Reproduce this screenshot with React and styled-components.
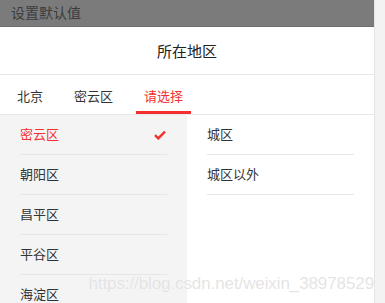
import React from "react";
import styled, { createGlobalStyle } from "styled-components";

const GlobalStyle = createGlobalStyle`
  html, body {
    margin: 0;
    padding: 0;
    background: #f3f3f3;
    font-family: "Noto Sans CJK SC", "Liberation Sans", sans-serif;
  }
`;

const Page = styled.div`
  position: relative;
  width: 374px;
  height: 303px;
  overflow: hidden;
  background: #fff;
  border-right: 1px solid #e4e4e4;
`;

const TopBar = styled.div`
  height: 26px;
  border-bottom: 1px solid #6e6e6e;
  background: #7b7b7b;
  color: #3c3c3c;
  font-size: 14px;
  line-height: 24px;
  padding-left: 11px;
`;

const Header = styled.div`
  height: 46px;
  padding-bottom: 1px;
  border-bottom: 1px solid #e8e8e8;
  display: flex;
  align-items: center;
  justify-content: center;
  font-size: 15px;
  color: #222;
`;

const Tabs = styled.div`
  height: 39px;
  border-bottom: 1px solid #e8e8e8;
  display: flex;
  gap: 15px;
  padding-left: 9px;
`;

const Tab = styled.div`
  padding: 0 8px;
  font-size: 13px;
  line-height: 38px;
  color: ${(p) => (p.active ? "#f23030" : "#333")};
  border-bottom: 3px solid ${(p) => (p.active ? "#f23030" : "transparent")};
  height: 34px;
  margin-top: 2px;
`;

const Columns = styled.div`
  display: flex;
  height: 200px;
`;

const Column = styled.div`
  width: ${(p) => p.w}px;
  background: ${(p) => p.bg};
  padding: 0 20px;
  box-sizing: border-box;
`;

const Item = styled.div`
  height: 37px;
  padding-bottom: 2px;
  border-bottom: 1px solid #e6e6e6;
  display: flex;
  align-items: center;
  justify-content: space-between;
  font-size: 13px;
  color: ${(p) => (p.active ? "#f23030" : "#333")};
`;

const Check = styled.svg`
  width: 12px;
  height: 10px;
  margin-right: 1px;
  margin-top: 2px;
`;

const Watermark = styled.div`
  position: absolute;
  right: 0px;
  bottom: 9px;
  font-family: "Liberation Sans", Arial, sans-serif;
  font-size: 17px;
  color: rgba(205, 205, 205, 0.55);
  text-shadow: 0 0 1px #fff;
  letter-spacing: -0.1px;
`;

const left = ["密云区", "朝阳区", "昌平区", "平谷区", "海淀区"];
const right = ["城区", "城区以外"];

export default function App() {
  return (
    <>
      <GlobalStyle />
      <Page>
        <TopBar>设置默认值</TopBar>
        <Header>所在地区</Header>
        <Tabs>
          <Tab>北京</Tab>
          <Tab>密云区</Tab>
          <Tab active>请选择</Tab>
        </Tabs>
        <Columns>
          <Column w={187} bg="#f4f4f4">
            {left.map((name, i) => (
              <Item key={name} active={i === 0}>
                {name}
                {i === 0 && (
                  <Check viewBox="0 0 12 10">
                    <path
                      d="M1 5.2 L4.3 8.4 L11 1.6"
                      fill="none"
                      stroke="#f23030"
                      strokeWidth="2.4"
                    />
                  </Check>
                )}
              </Item>
            ))}
          </Column>
          <Column w={187} bg="#fff">
            {right.map((name) => (
              <Item key={name}>{name}</Item>
            ))}
          </Column>
        </Columns>
        <Watermark>https://blog.csdn.net/weixin_38978529</Watermark>
      </Page>
    </>
  );
}
